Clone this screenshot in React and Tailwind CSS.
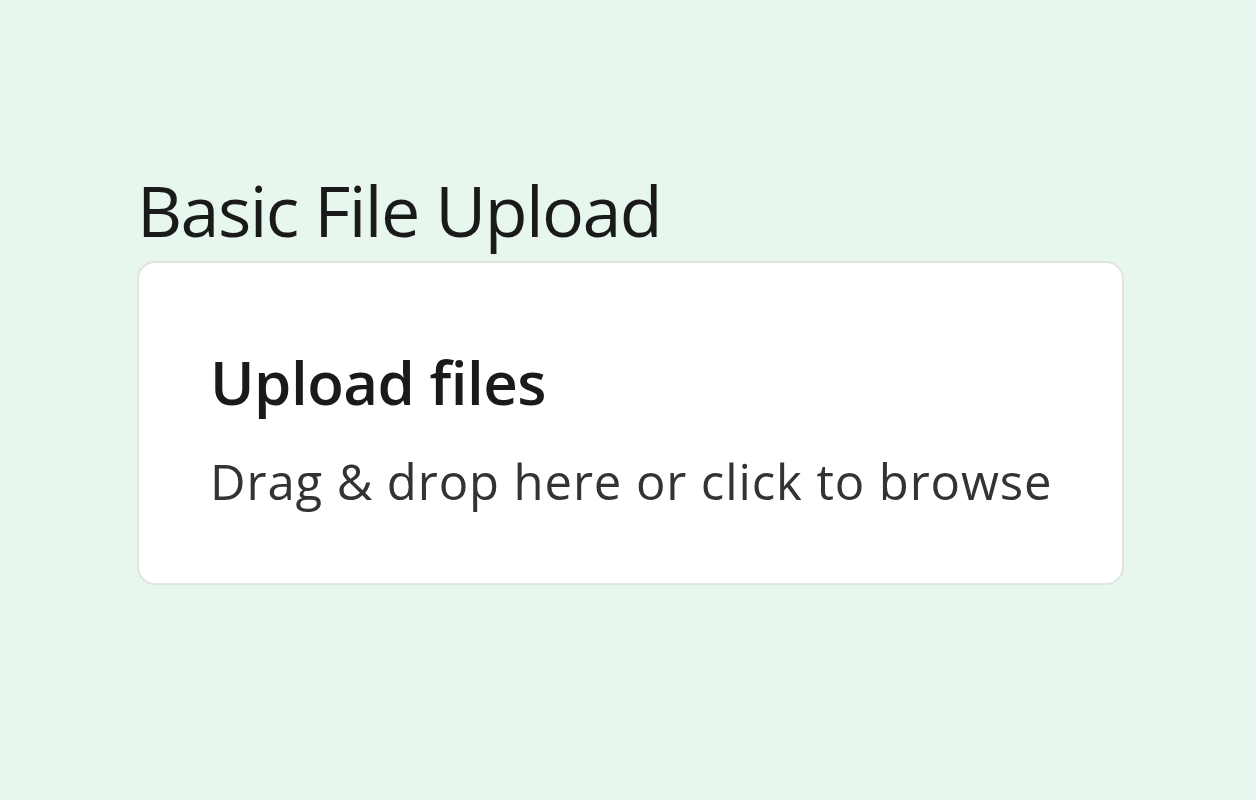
export default function App() {
  return (
    <div className="min-h-screen w-full bg-[#e7f7ee] font-['Open_Sans',sans-serif] text-[#1a1a1a]">
      <div className="pl-[137px] pt-[168px]">
        <h1 className="text-[70px] leading-[84px] font-normal tracking-[-1.6px]">Basic File Upload</h1>
        <div className="mt-[9px] w-[987px] h-[324px] rounded-[18px] border-2 border-[#e1e4e2] bg-white pl-[71px] pt-[84px]">
          <h2 className="text-[60px] leading-[70px] font-semibold tracking-[-0.5px]">Upload files</h2>
          <p className="mt-[32px] text-[49px] leading-[64px] text-[#333] tracking-[0.9px]">Drag &amp; drop here or click to browse</p>
        </div>
      </div>
    </div>
  )
}
